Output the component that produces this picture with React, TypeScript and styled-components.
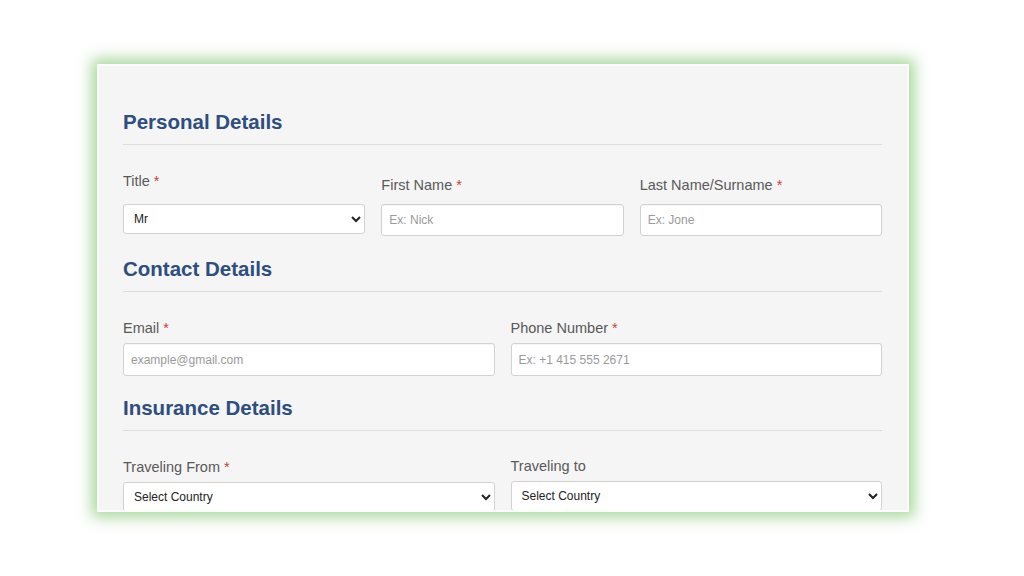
import styled, { createGlobalStyle } from "styled-components";

const GlobalStyle = createGlobalStyle`
    html, body {
        margin: 0;
        padding: 0;
        background: #ffffff;
        font-family: "Liberation Sans", Arial, sans-serif;
    }
`

const Page = styled.div`
    width: 1024px;
    height: 576px;
    box-sizing: border-box;
    padding: 64px 0 0 97px;
    overflow: hidden;
`

const Card = styled.form`
    width: 812px;
    height: 448px;
    box-sizing: border-box;
    background: #f5f5f5;
    border: 2px solid #fbfdfb;
    box-shadow: 0 0 14px 5px rgba(125, 200, 110, 0.7);
    padding: 44px 25px 0 24px;
    overflow: hidden;
`

const SectionTitle = styled.h2<{ $top: number }>`
    margin: ${props => props.$top}px 0 0 0;
    padding-bottom: 10px;
    border-bottom: 1px solid #dcdcdc;
    font-size: 20.5px;
    line-height: 24px;
    font-weight: 700;
    color: #2d4e7e;
`

const Row = styled.div<{ $cols: number }>`
    display: grid;
    grid-template-columns: repeat(${props => props.$cols}, 1fr);
    column-gap: 16px;
    padding-top: 28px;
    align-items: start;
`

const Field = styled.div`
    display: flex;
    flex-direction: column;
`

const Label = styled.label<{ $top?: number; $gap?: number }>`
    font-size: 14.5px;
    line-height: 17px;
    color: #595959;
    margin-top: ${props => props.$top ?? 0}px;
    margin-bottom: ${props => props.$gap ?? 6}px;
`

const Star = styled.span`
    color: #c9413a;
    margin-left: 4px;
`

const Input = styled.input<{ $h?: number }>`
    box-sizing: border-box;
    width: 100%;
    height: ${props => props.$h ?? 33}px;
    padding: 0 7px;
    border: 1px solid #d2d2d2;
    border-radius: 3px;
    background: #ffffff;
    font-family: "Liberation Sans", Arial, sans-serif;
    font-size: 12px;
    color: #333333;
    box-shadow: inset 0 1px 1px rgba(0, 0, 0, 0.04);
    &::placeholder {
        color: #9a9a9a;
    }
`

const Select = styled.select`
    box-sizing: border-box;
    width: 100%;
    height: 30px;
    padding: 0 6px;
    border: 1px solid #d2d2d2;
    border-radius: 3px;
    background: #ffffff;
    font-family: "Liberation Sans", Arial, sans-serif;
    font-size: 12px;
    color: #222222;
`

function App() {
    return (
        <>
            <GlobalStyle />
            <Page>
                <Card onSubmit={e => e.preventDefault()}>
                    <SectionTitle $top={0}>Personal Details</SectionTitle>
                    <Row $cols={3}>
                        <Field>
                            <Label $gap={14}>Title<Star>*</Star></Label>
                            <Select defaultValue="Mr">
                                <option>Mr</option>
                                <option>Mrs</option>
                                <option>Ms</option>
                            </Select>
                        </Field>
                        <Field>
                            <Label $top={4} $gap={10}>First Name<Star>*</Star></Label>
                            <Input $h={32} placeholder="Ex: Nick" />
                        </Field>
                        <Field>
                            <Label $top={4} $gap={10}>Last Name/Surname<Star>*</Star></Label>
                            <Input $h={32} placeholder="Ex: Jone" />
                        </Field>
                    </Row>

                    <SectionTitle $top={21}>Contact Details</SectionTitle>
                    <Row $cols={2}>
                        <Field>
                            <Label>Email<Star>*</Star></Label>
                            <Input placeholder="example@gmail.com" />
                        </Field>
                        <Field>
                            <Label>Phone Number<Star>*</Star></Label>
                            <Input placeholder="Ex: +1 415 555 2671" />
                        </Field>
                    </Row>

                    <SectionTitle $top={20}>Insurance Details</SectionTitle>
                    <Row $cols={2}>
                        <Field>
                            <Label>Traveling From<Star>*</Star></Label>
                            <Select defaultValue="">
                                <option value="">Select Country</option>
                            </Select>
                        </Field>
                        <Field>
                            <Label $top={-1}>Traveling to</Label>
                            <Select defaultValue="">
                                <option value="">Select Country</option>
                            </Select>
                        </Field>
                    </Row>
                </Card>
            </Page>
        </>
    );
}

export default App
